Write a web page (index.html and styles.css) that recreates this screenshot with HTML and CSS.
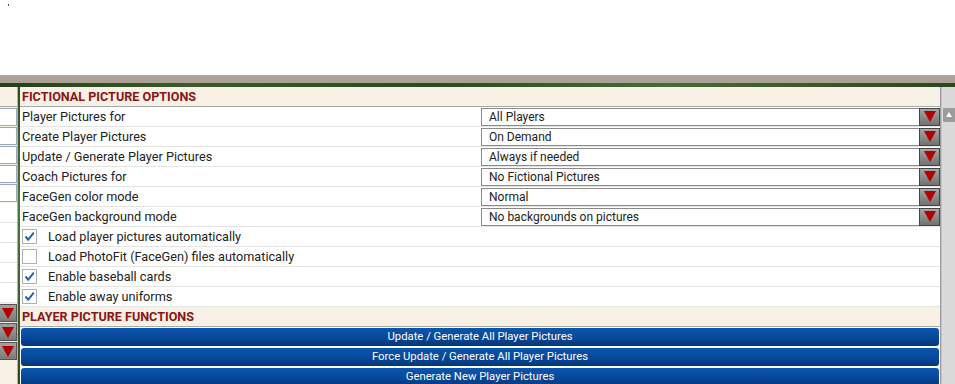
FILE: index.html
```html
<!DOCTYPE html>
<html lang="en">
<head>
  <meta charset="UTF-8" />
  <title>Fictional Picture Options</title>
  <link rel="stylesheet" href="styles.css">
</head>
<body>

  <div class="top"><span class="dot"></span></div>
  <div class="bar"></div>
  <div class="grass"></div>

  <div class="frame">
    <div class="side">
      <div class="side-head"></div>
      <div class="side-box"></div>
      <div class="side-box"></div>
      <div class="side-box"></div>
      <div class="side-box"></div>
      <div class="side-box"></div>
      <div class="side-row"></div>
      <div class="side-row"></div>
      <div class="side-row"></div>
      <div class="side-row"></div>
      <div class="side-row"></div>
      <div class="side-btn"><span class="tri"></span></div>
      <div class="side-btn"><span class="tri"></span></div>
      <div class="side-btn"><span class="tri"></span></div>
    </div>

    <div class="main">
      <div class="section">FICTIONAL PICTURE OPTIONS</div>

      <div class="row">
        <div class="label">Player Pictures for</div>
        <div class="select"><span class="value">All Players</span><span class="arrow"><span class="tri"></span></span></div>
      </div>
      <div class="row">
        <div class="label">Create Player Pictures</div>
        <div class="select"><span class="value">On Demand</span><span class="arrow"><span class="tri"></span></span></div>
      </div>
      <div class="row">
        <div class="label">Update / Generate Player Pictures</div>
        <div class="select"><span class="value">Always if needed</span><span class="arrow"><span class="tri"></span></span></div>
      </div>
      <div class="row">
        <div class="label">Coach Pictures for</div>
        <div class="select"><span class="value">No Fictional Pictures</span><span class="arrow"><span class="tri"></span></span></div>
      </div>
      <div class="row">
        <div class="label">FaceGen color mode</div>
        <div class="select"><span class="value">Normal</span><span class="arrow"><span class="tri"></span></span></div>
      </div>
      <div class="row">
        <div class="label">FaceGen background mode</div>
        <div class="select"><span class="value">No backgrounds on pictures</span><span class="arrow"><span class="tri"></span></span></div>
      </div>

      <div class="row check-row">
        <span class="box checked"><svg viewBox="0 0 13 13"><path d="M2.5 6.5 L5.2 9.6 L10.8 2.6" /></svg></span>
        <span class="label">Load player pictures automatically</span>
      </div>
      <div class="row check-row">
        <span class="box"></span>
        <span class="label">Load PhotoFit (FaceGen) files automatically</span>
      </div>
      <div class="row check-row">
        <span class="box checked"><svg viewBox="0 0 13 13"><path d="M2.5 6.5 L5.2 9.6 L10.8 2.6" /></svg></span>
        <span class="label">Enable baseball cards</span>
      </div>
      <div class="row check-row">
        <span class="box checked"><svg viewBox="0 0 13 13"><path d="M2.5 6.5 L5.2 9.6 L10.8 2.6" /></svg></span>
        <span class="label">Enable away uniforms</span>
      </div>

      <div class="section">PLAYER PICTURE FUNCTIONS</div>
      <div class="buttons">
        <div class="btn">Update / Generate All Player Pictures</div>
        <div class="btn">Force Update / Generate All Player Pictures</div>
        <div class="btn">Generate New Player Pictures</div>
      </div>
    </div>

    <div class="scroll">
      <div class="scroll-up"></div>
    </div>
  </div>

</body>
</html>
```

FILE: styles.css
```css
body {
  margin: 0;
  font-family: Roboto, "Noto Sans", sans-serif;
  background: #fff;
  overflow: hidden;
}
.top {
  height: 75px;
  position: relative;
}
.dot {
  position: absolute;
  left: 8px;
  top: 4px;
  width: 1px;
  height: 2px;
  background: #3344cc;
}
.bar {
  height: 8px;
  background: #aba196;
}
.grass {
  height: 4px;
  background: linear-gradient(90deg, #25401a, #3c5a28 20%, #2b4a1e 45%, #4a6a34 70%, #2c4620);
}
.frame {
  display: flex;
  height: 297px;
  background: linear-gradient(180deg, #2f4c22, #4e7a3a 40%, #2c4a1e);
}

/* left strip */
.side {
  width: 17px;
  background: #f8f1e5;
  border-right: 1px solid #b8b2a8;
  margin-right: 2px;
}
.side-head {
  height: 19px;
  border-bottom: 1px solid #a9a9a9;
}
.side-box {
  height: 18px;
  margin: 1px 0 1px 0;
  background: #fff;
  border: 1px solid #9aa8b8;
  border-left: none;
  box-sizing: border-box;
}
.side-row {
  height: 19px;
  background: #fff;
  border-bottom: 1px solid #e4e4e4;
}
.side-btn {
  height: 18px;
  margin-top: 1px;
  margin-bottom: 1px;
  background: linear-gradient(180deg, #a3a3a3, #7a7a7a);
  border: 1px solid #555;
  border-left: none;
  box-sizing: border-box;
  display: flex;
  align-items: center;
  justify-content: center;
}

/* main panel */
.main {
  flex: 1;
  background: #fff;
  border-right: 1px solid #9a9a9a;
}
.section {
  height: 19px;
  line-height: 20px;
  background: #f8f1e5;
  color: #8a1515;
  font-weight: bold;
  font-size: 12.6px;
  padding-left: 2px;
  border-bottom: 1px solid #a9a9a9;
}
.row {
  height: 19px;
  border-bottom: 1px solid #e4e4e4;
  display: grid;
  grid-template-columns: 461px 1fr;
  align-items: center;
  font-size: 12.7px;
  color: #222;
}
.row .label {
  padding-left: 2px;
}
.select {
  display: flex;
  height: 18px;
  box-sizing: border-box;
  border: 1px solid #8a8a8a;
  background: #fff;
}
.value {
  flex: 1;
  padding-left: 7px;
  line-height: 16px;
  font-size: 12px;
}
.arrow {
  width: 19px;
  margin: -1px -1px -1px 0;
  background: linear-gradient(180deg, #a5a5a5, #727272);
  border: 1px solid #444;
  display: flex;
  align-items: center;
  justify-content: center;
}
.tri {
  width: 0;
  height: 0;
  border-left: 6px solid transparent;
  border-right: 6px solid transparent;
  border-top: 11px solid #b30000;
}

.check-row {
  display: flex;
  align-items: center;
}
.box {
  width: 13px;
  height: 13px;
  margin-left: 2px;
  border: 1px solid #b0b0b0;
  background: #fff;
  display: block;
}
.box svg {
  display: block;
  width: 13px;
  height: 13px;
}
.box path {
  fill: none;
  stroke: #2a62a8;
  stroke-width: 2;
}
.check-row .label {
  padding-left: 11px;
}

.buttons {
  padding: 1px 1px 0 1px;
}
.btn {
  height: 18px;
  margin-bottom: 2px;
  border-radius: 3px;
  background: linear-gradient(180deg, #0b56ad, #08489a 55%, #033778);
  color: #fff;
  font-size: 11.3px;
  line-height: 18px;
  text-align: center;
}

/* scroll bar */
.scroll {
  width: 13px;
  background: #dadada;
  border-left: 1px solid #c4c4c4;
  padding-top: 21px;
}
.scroll-up {
  height: 14px;
  margin-left: 1px;
  background: #9c9c9c;
  position: relative;
}
.scroll-up::after {
  content: "";
  position: absolute;
  left: 3px;
  top: 4px;
  border-left: 3px solid transparent;
  border-right: 3px solid transparent;
  border-bottom: 5px solid #fff;
}
```
